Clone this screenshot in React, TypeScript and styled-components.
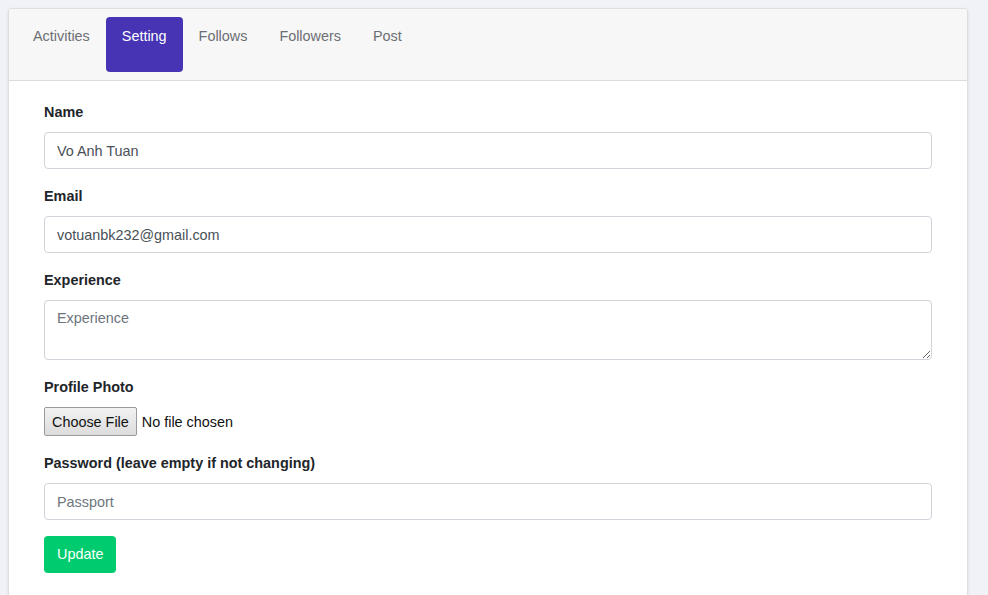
import React from "react";
import styled, { createGlobalStyle } from "styled-components";

const Global = createGlobalStyle`
  html, body { margin: 0; padding: 0; }
  body {
    background: #f1f2f7;
    padding: 8px;
    font-family: "Liberation Sans", Arial, sans-serif;
    font-size: 14.4px;
    color: #212529;
  }
  * { box-sizing: border-box; }
`;

const Card = styled.div`
  width: 960px;
  background: #fff;
  border: 1px solid rgba(0, 0, 0, 0.125);
  border-radius: 4px;
  box-shadow: 0 1px 3px rgba(0, 0, 0, 0.1);
  overflow: hidden;
`;

const CardHeader = styled.div`
  background: #f7f7f7;
  border-bottom: 1px solid #dcdcdc;
  padding: 8px;
`;

const Nav = styled.ul`
  display: flex;
  list-style: none;
  margin: 0;
  padding: 0;
`;

const NavLink = styled.a<{ $active?: boolean }>`
  display: block;
  height: 55px;
  padding: 9px 16px;
  line-height: 20px;
  font-size: 14.4px;
  border-radius: 4px;
  text-decoration: none;
  cursor: pointer;
  color: ${(p) => (p.$active ? "#fff" : "#6c6f74")};
  background: ${(p) => (p.$active ? "#4634b4" : "transparent")};
`;

const CardBody = styled.div`
  padding: 20px 35px 24px 35px;
`;

const Group = styled.div`
  margin-bottom: 16px;
`;

const Label = styled.label`
  display: block;
  font-weight: bold;
  font-size: 14.4px;
  line-height: 22px;
  margin-bottom: 9px;
  color: #212529;
`;

const Input = styled.input`
  display: block;
  width: 100%;
  height: 37px;
  padding: 6px 12px;
  font-family: "Liberation Sans", Arial, sans-serif;
  font-size: 14.4px;
  color: #495057;
  background: #fff;
  border: 1px solid #ced4da;
  border-radius: 4px;
  outline: none;
  &::placeholder { color: #6c757d; opacity: 1; }
`;

const TextArea = styled.textarea`
  display: block;
  width: 100%;
  height: 60px;
  padding: 7px 12px;
  font-family: "Liberation Sans", Arial, sans-serif;
  font-size: 14.4px;
  line-height: 20px;
  color: #495057;
  border: 1px solid #ced4da;
  border-radius: 4px;
  outline: none;
  &::placeholder { color: #6c757d; opacity: 1; }
`;

const FileInput = styled.input`
  display: block;
  height: 29px;
  font-family: "Liberation Sans", Arial, sans-serif;
  font-size: 14.4px;
  color: #111;
  &::file-selector-button {
    font-family: "Liberation Sans", Arial, sans-serif;
    font-size: 14.4px;
    color: #111;
    height: 29px;
    padding: 0 7px;
    margin: 0 5px 0 0;
    border: 1px solid #9a9a9a;
    border-radius: 2px;
    background: linear-gradient(#f2f2f2, #dcdcdc);
  }
`;

const SubmitButton = styled.button`
  height: 37px;
  padding: 0 13px 2px;
  font-family: "Liberation Sans", Arial, sans-serif;
  font-size: 14.4px;
  color: #fff;
  background: #00cc6f;
  border: none;
  border-radius: 4px;
  cursor: pointer;
`;

const tabs = ["Activities", "Setting", "Follows", "Followers", "Post"];

export default function App() {
  return (
    <>
      <Global />
      <Card>
        <CardHeader>
          <Nav>
            {tabs.map((t) => (
              <li key={t}>
                <NavLink $active={t === "Setting"}>{t}</NavLink>
              </li>
            ))}
          </Nav>
        </CardHeader>
        <CardBody>
          <form onSubmit={(e) => e.preventDefault()}>
            <Group>
              <Label>Name</Label>
              <Input defaultValue="Vo Anh Tuan" />
            </Group>
            <Group>
              <Label>Email</Label>
              <Input defaultValue="votuanbk232@gmail.com" />
            </Group>
            <Group>
              <Label>Experience</Label>
              <TextArea placeholder="Experience" />
            </Group>
            <Group>
              <Label>Profile Photo</Label>
              <FileInput type="file" />
            </Group>
            <Group>
              <Label>Password (leave empty if not changing)</Label>
              <Input type="password" placeholder="Passport" />
            </Group>
            <SubmitButton type="submit">Update</SubmitButton>
          </form>
        </CardBody>
      </Card>
    </>
  );
}
